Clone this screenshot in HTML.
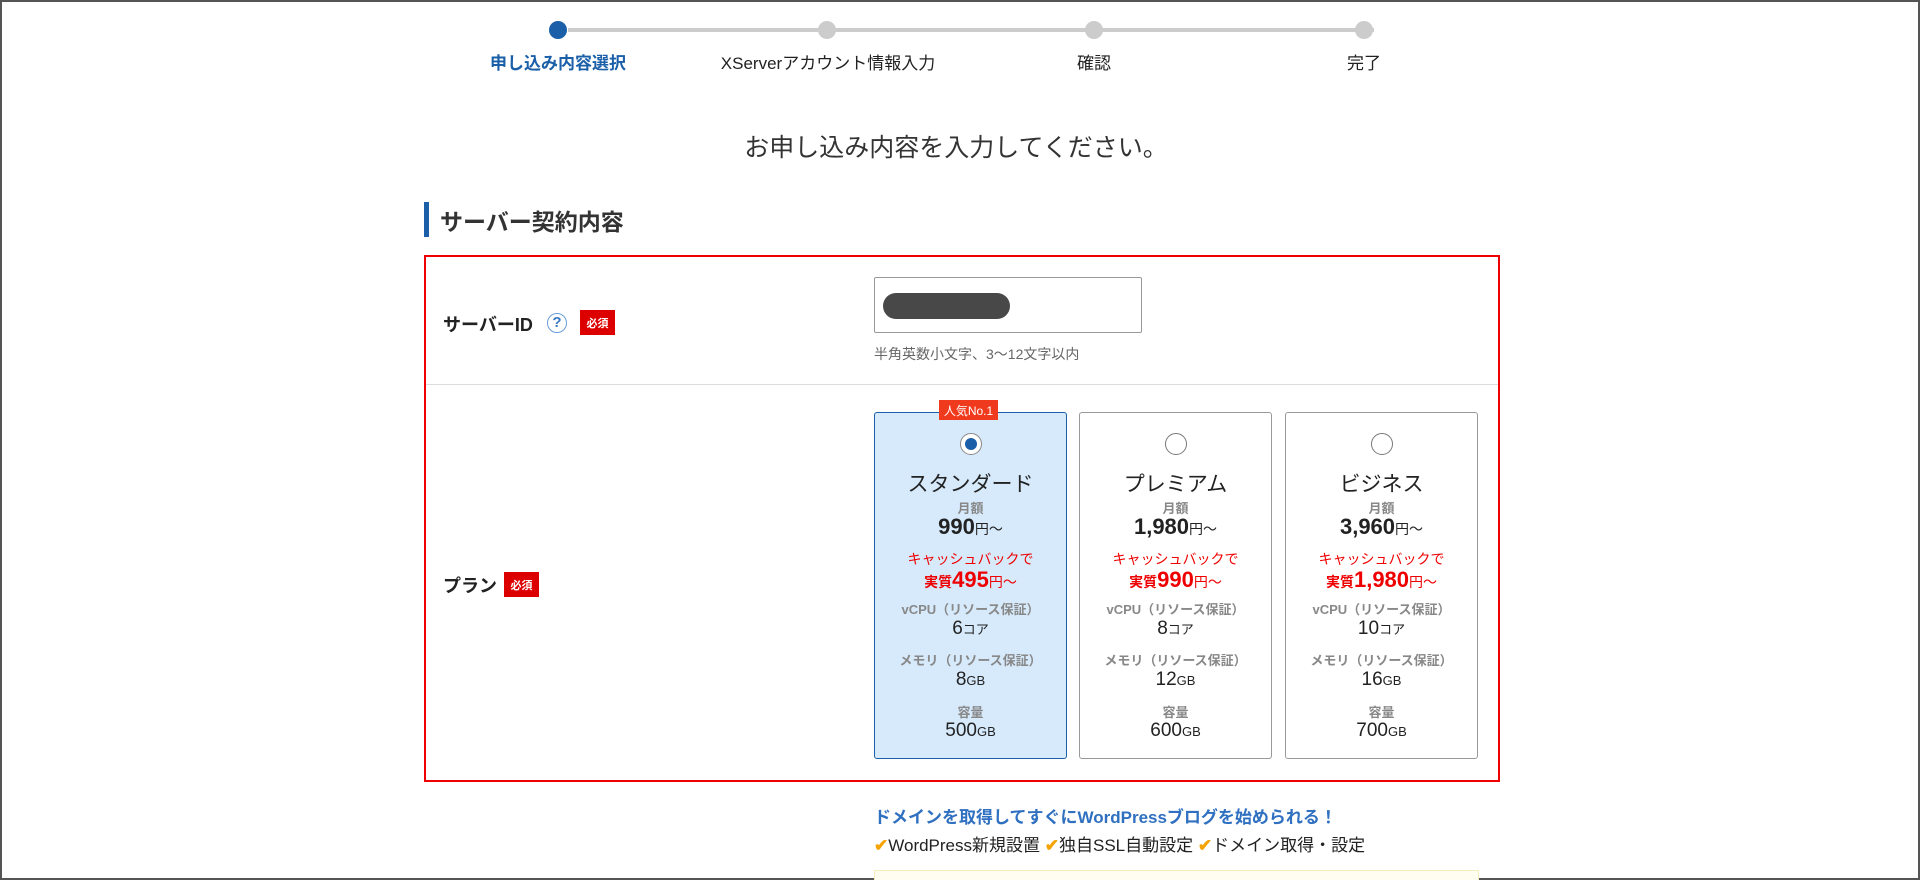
<!DOCTYPE html>
<html><head><meta charset="utf-8"><style>
*{margin:0;padding:0;box-sizing:border-box}
html,body{width:1920px;height:880px;overflow:hidden;background:#fff}
body{position:relative;font-family:"Liberation Sans","Noto Sans CJK JP",sans-serif;color:#222;border:2px solid #555}
.a{position:absolute;white-space:nowrap}
.c{text-align:center}
.dot{position:absolute;width:18px;height:18px;border-radius:50%;background:#ccc;top:19px}
.card{position:absolute;top:410px;width:193px;height:347px;border:1px solid #999;border-radius:3px;background:#fff}
.card.sel{background:#d6eafc;border-color:#1a5fa8}
.card .t{position:absolute;left:0;right:0;text-align:center;white-space:nowrap}
.radio{position:absolute;left:85px;top:20px;width:22px;height:22px;border-radius:50%;border:1px solid #777;background:#fff}
.lbl{font-size:13px;font-weight:bold;color:#888}
.big{font-size:19px;color:#222}
.big small{font-size:13px}
.price{font-size:22px;font-weight:bold;color:#222}
.price small{font-size:14px;font-weight:normal}
.red{color:#e00}
.badge{position:absolute;background:#d00;color:#fff;font-size:11px;font-weight:bold;display:flex;align-items:center;justify-content:center}
</style></head><body>
<div class="a" style="left:566px;top:26px;width:806px;height:4px;background:#ccc"></div>
<div class="dot" style="left:547px;background:#1a5fa8"></div>
<div class="dot" style="left:816px"></div>
<div class="dot" style="left:1083px"></div>
<div class="dot" style="left:1353px"></div>
<div class="a c" style="left:456px;width:200px;top:47px;font-size:17px;font-weight:bold;color:#1a5fa8">申し込み内容選択</div>
<div class="a c" style="left:706px;width:240px;top:47px;font-size:17px">XServerアカウント情報入力</div>
<div class="a c" style="left:1042px;width:100px;top:47px;font-size:17px">確認</div>
<div class="a c" style="left:1312px;width:100px;top:47px;font-size:17px">完了</div>
<div class="a c" style="left:654px;width:600px;top:126px;font-size:25px;color:#333">お申し込み内容を入力してください。</div>
<div class="a" style="left:422px;top:200px;width:5px;height:35px;background:#1a5fa8"></div>
<div class="a" style="left:438px;top:201px;font-size:23px;font-weight:bold;color:#333">サーバー契約内容</div>
<div class="a" style="left:422px;top:253px;width:1076px;height:527px;border:2px solid #e00"></div>
<div class="a" style="left:424px;top:382px;width:1072px;height:1px;background:#ddd"></div>
<div class="a" style="left:441px;top:309px;font-size:18px;font-weight:bold">サーバーID</div>
<div class="a" style="left:545px;top:311px;width:20px;height:20px;border-radius:50%;border:1.5px solid #6a9fd8;color:#3a78c2;font-size:15px;font-weight:bold;text-align:center;line-height:17px">?</div>
<div class="badge" style="left:578px;top:308px;width:35px;height:25px">必須</div>
<div class="a" style="left:872px;top:275px;width:268px;height:56px;border:1px solid #999;border-radius:2px"></div>
<div class="a" style="left:881px;top:291px;width:127px;height:26px;border-radius:13px;background:#484848"></div>
<div class="a" style="left:872px;top:342px;font-size:14px;color:#666">半角英数小文字、3〜12文字以内</div>
<div class="a" style="left:441px;top:570px;font-size:18px;font-weight:bold">プラン</div>
<div class="badge" style="left:502px;top:570px;width:35px;height:25px">必須</div>

<div class="card sel" style="left:872px">
<div class="radio" style="border-color:#888"><span style="position:absolute;left:4px;top:4px;width:12px;height:12px;border-radius:50%;background:#1a5fa8"></span></div>
<div class="t" style="top:55px;font-size:21px">スタンダード</div>
<div class="t lbl" style="top:85px">月額</div>
<div class="t price" style="top:101px">990<small>円〜</small></div>
<div class="t red" style="top:136px;font-size:14px">キャッシュバックで</div>
<div class="t red" style="top:154px;font-size:14px;font-weight:bold">実質<span style="font-size:22px">495</span><span style="font-weight:normal">円〜</span></div>
<div class="t lbl" style="top:186px">vCPU（リソース保証）</div>
<div class="t big" style="top:205px">6<small>コア</small></div>
<div class="t lbl" style="top:237px">メモリ（リソース保証）</div>
<div class="t big" style="top:256px">8<small>GB</small></div>
<div class="t lbl" style="top:289px">容量</div>
<div class="t big" style="top:307px">500<small>GB</small></div>
</div>
<div class="card" style="left:1077px">
<div class="radio"></div>
<div class="t" style="top:55px;font-size:21px">プレミアム</div>
<div class="t lbl" style="top:85px">月額</div>
<div class="t price" style="top:101px">1,980<small>円〜</small></div>
<div class="t red" style="top:136px;font-size:14px">キャッシュバックで</div>
<div class="t red" style="top:154px;font-size:14px;font-weight:bold">実質<span style="font-size:22px">990</span><span style="font-weight:normal">円〜</span></div>
<div class="t lbl" style="top:186px">vCPU（リソース保証）</div>
<div class="t big" style="top:205px">8<small>コア</small></div>
<div class="t lbl" style="top:237px">メモリ（リソース保証）</div>
<div class="t big" style="top:256px">12<small>GB</small></div>
<div class="t lbl" style="top:289px">容量</div>
<div class="t big" style="top:307px">600<small>GB</small></div>
</div>
<div class="card" style="left:1283px">
<div class="radio"></div>
<div class="t" style="top:55px;font-size:21px">ビジネス</div>
<div class="t lbl" style="top:85px">月額</div>
<div class="t price" style="top:101px">3,960<small>円〜</small></div>
<div class="t red" style="top:136px;font-size:14px">キャッシュバックで</div>
<div class="t red" style="top:154px;font-size:14px;font-weight:bold">実質<span style="font-size:22px">1,980</span><span style="font-weight:normal">円〜</span></div>
<div class="t lbl" style="top:186px">vCPU（リソース保証）</div>
<div class="t big" style="top:205px">10<small>コア</small></div>
<div class="t lbl" style="top:237px">メモリ（リソース保証）</div>
<div class="t big" style="top:256px">16<small>GB</small></div>
<div class="t lbl" style="top:289px">容量</div>
<div class="t big" style="top:307px">700<small>GB</small></div>
</div>
<div class="badge" style="left:937px;top:398px;width:59px;height:20px;background:#f03a1e;font-weight:normal;font-size:12px">人気No.1</div>

<div class="a" style="left:872px;top:801px;font-size:17px;font-weight:bold;color:#2f70c0">ドメインを取得してすぐにWordPressブログを始められる！</div>
<div class="a" style="left:872px;top:829px;font-size:17px;color:#222"><span style="color:#f5a300;font-weight:bold">✔</span>WordPress新規設置 <span style="color:#f5a300;font-weight:bold">✔</span>独自SSL自動設定 <span style="color:#f5a300;font-weight:bold">✔</span>ドメイン取得・設定</div>
<div class="a" style="left:872px;top:868px;width:605px;height:20px;background:#fffdf0;border:1px solid #f3eebc"></div>
</body></html>
